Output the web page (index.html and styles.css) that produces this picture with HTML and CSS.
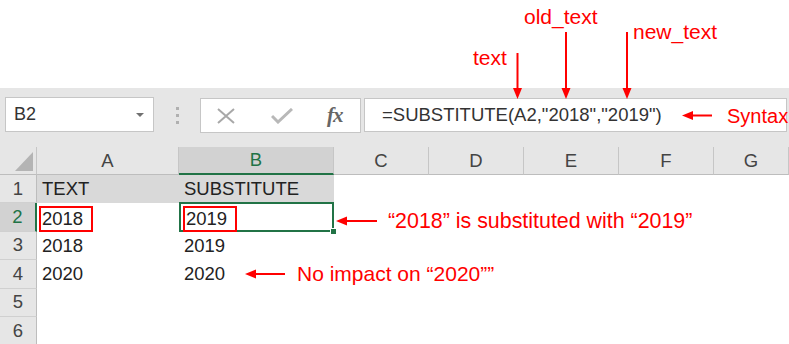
FILE: index.html
```html
<!DOCTYPE html>
<html lang="en">
<head>
  <meta charset="UTF-8" />
  <title>SUBSTITUTE function</title>
  <link rel="stylesheet" href="styles.css">
</head>
<body>
  <div class="page">
    <div class="top-space"></div>

    <div class="toolbar">
      <div class="name-box">
        <span>B2</span>
        <span class="caret"></span>
      </div>
      <div class="grip"><i></i><i></i><i></i></div>
      <div class="buttons">
        <svg class="btn-x" width="18" height="16" viewBox="0 0 18 16">
          <path d="M1 1 L17 15 M17 1 L1 15" stroke="#a8a8a8" stroke-width="2" fill="none"/>
        </svg>
        <svg class="btn-ok" width="22" height="16" viewBox="0 0 22 16">
          <path d="M1 8 L7 14 L21 1" stroke="#b8b8b8" stroke-width="3" fill="none"/>
        </svg>
        <span class="fx">fx</span>
      </div>
      <div class="formula">=SUBSTITUTE(A2,"2018","2019")</div>
    </div>

    <div class="sheet">
      <div class="corner"><span class="tri"></span></div>
      <div class="col-head">A</div>
      <div class="col-head active">B</div>
      <div class="col-head">C</div>
      <div class="col-head">D</div>
      <div class="col-head">E</div>
      <div class="col-head">F</div>
      <div class="col-head">G</div>

      <div class="row-head">1</div>
      <div class="cell filled">TEXT</div>
      <div class="cell filled">SUBSTITUTE</div>
      <div class="cell"></div><div class="cell"></div><div class="cell"></div><div class="cell"></div><div class="cell"></div>

      <div class="row-head active">2</div>
      <div class="cell"><span class="mark">2018</span></div>
      <div class="cell selected"><span class="mark">2019</span><span class="handle"></span></div>
      <div class="cell"></div><div class="cell"></div><div class="cell"></div><div class="cell"></div><div class="cell"></div>

      <div class="row-head">3</div>
      <div class="cell">2018</div>
      <div class="cell">2019</div>
      <div class="cell"></div><div class="cell"></div><div class="cell"></div><div class="cell"></div><div class="cell"></div>

      <div class="row-head">4</div>
      <div class="cell">2020</div>
      <div class="cell">2020</div>
      <div class="cell"></div><div class="cell"></div><div class="cell"></div><div class="cell"></div><div class="cell"></div>

      <div class="row-head">5</div>
      <div class="cell"></div><div class="cell"></div><div class="cell"></div><div class="cell"></div><div class="cell"></div><div class="cell"></div><div class="cell"></div>

      <div class="row-head">6</div>
      <div class="cell"></div><div class="cell"></div><div class="cell"></div><div class="cell"></div><div class="cell"></div><div class="cell"></div><div class="cell"></div>
    </div>

    <!-- annotations drawn over the sheet -->
    <svg class="arrows" width="789" height="344" viewBox="0 0 789 344">
      <g stroke="#ff0000" stroke-width="2" fill="#ff0000">
        <line x1="517.5" y1="53" x2="517.5" y2="90"/>
        <polygon points="513,88 522,88 517.5,99" stroke="none"/>
        <line x1="566" y1="32" x2="566" y2="90"/>
        <polygon points="561.5,88 570.5,88 566,99" stroke="none"/>
        <line x1="627" y1="32" x2="627" y2="90"/>
        <polygon points="622.5,88 631.5,88 627,99" stroke="none"/>

        <line x1="691" y1="115.5" x2="712" y2="115.5"/>
        <polygon points="682,115.5 693,111 693,120" stroke="none"/>

        <line x1="345" y1="221" x2="377" y2="221"/>
        <polygon points="336,221 347,216.5 347,225.5" stroke="none"/>

        <line x1="254" y1="274" x2="285" y2="274"/>
        <polygon points="245,274 256,269.5 256,278.5" stroke="none"/>
      </g>
    </svg>
    <span class="note note-text">text</span>
    <span class="note note-old">old_text</span>
    <span class="note note-new">new_text</span>
    <span class="note note-syntax">Syntax</span>
    <span class="note note-row2">“2018” is substituted with “2019”</span>
    <span class="note note-row4">No impact on “2020””</span>
  </div>
</body>
</html>
```

FILE: styles.css
```css
* {
  margin: 0;
  padding: 0;
  box-sizing: border-box;
}

body {
  font-family: 'Liberation Sans', Arial, sans-serif;
  background-color: #fff;
  color: #222;
}

.page {
  position: relative;
  width: 789px;
  height: 344px;
  overflow: hidden;
}

.top-space {
  height: 88px;
}

/* formula bar */
.toolbar {
  display: flex;
  align-items: flex-start;
  height: 59px;
  padding: 9px 2px 0 5px;
  background-color: #e6e6e6;
}

.name-box {
  display: flex;
  align-items: center;
  justify-content: space-between;
  width: 149px;
  height: 35px;
  padding: 0 9px 0 8px;
  background-color: #fff;
  border: 1px solid #c6c6c6;
  font-size: 18px;
  color: #333;
}

.caret {
  width: 0;
  height: 0;
  border-left: 4.5px solid transparent;
  border-right: 4.5px solid transparent;
  border-top: 4.5px solid #707070;
}

.grip {
  display: flex;
  flex-direction: column;
  gap: 4px;
  margin: 10px 0 0 22px;
}

.grip i {
  width: 3px;
  height: 3px;
  background-color: #b0b0b0;
}

.buttons {
  display: flex;
  align-items: center;
  width: 161px;
  height: 35px;
  margin-left: 21px;
  margin-top: 1px;
  background-color: #fff;
  border: 1px solid #c6c6c6;
}

.btn-x {
  margin-left: 16px;
}

.btn-ok {
  margin-left: 36px;
}

.fx {
  margin-left: 34px;
  font-family: 'Liberation Serif', 'DejaVu Serif', serif;
  font-style: italic;
  font-weight: bold;
  font-size: 21px;
  letter-spacing: -1px;
  color: #666;
}

.formula {
  flex: 1;
  height: 34px;
  margin-left: 3px;
  margin-top: 1px;
  padding: 5px 0 0 17px;
  background-color: #fff;
  border: 1px solid #c6c6c6;
  font-size: 18.5px;
  color: #333;
}

/* grid */
.sheet {
  display: grid;
  grid-template-columns: 37px 142px 155px 95px 95px 95px 95px 75px;
  grid-template-rows: 28px repeat(6, 28.4px);
  font-size: 18.5px;
}

.corner {
  position: relative;
  background-color: #e6e6e6;
  border-right: 1px solid #c6c6c6;
  border-bottom: 1px solid #bdbdbd;
}

.tri {
  position: absolute;
  left: 15px;
  top: 5px;
  width: 0;
  height: 0;
  border-left: 18px solid transparent;
  border-bottom: 19px solid #b4b4b4;
}

.col-head {
  display: flex;
  align-items: center;
  justify-content: center;
  background-color: #e6e6e6;
  border-right: 1px solid #c6c6c6;
  border-bottom: 1px solid #bdbdbd;
  color: #444;
}

.col-head.active {
  background-color: #d2d2d2;
  border-bottom: 2px solid #217346;
  color: #217346;
}

.row-head {
  display: flex;
  align-items: center;
  justify-content: center;
  background-color: #e6e6e6;
  border-right: 1px solid #bdbdbd;
  border-bottom: 1px solid #d0d0d0;
  color: #444;
}

.row-head.active {
  background-color: #d2d2d2;
  border-right: 2px solid #217346;
  color: #217346;
}

.cell {
  position: relative;
  display: flex;
  align-items: center;
  padding-left: 5px;
  white-space: nowrap;
}

.cell.filled {
  background-color: #d9d9d9;
}

.cell.selected {
  border: 2px solid #217346;
  margin-top: -1px;
  padding-left: 3px;
}

.handle {
  position: absolute;
  right: -5px;
  bottom: -5px;
  width: 7px;
  height: 7px;
  background-color: #217346;
  border: 1px solid #fff;
}

.mark {
  display: flex;
  align-items: center;
  height: 26px;
  margin: 3px 0 0 -3px;
  padding: 0 8px 0 1px;
  border: 2px solid #ff0000;
}

.cell.selected .mark {
  margin-left: -1px;
  margin-top: 4px;
}

/* annotations */
.arrows {
  position: absolute;
  top: 0;
  left: 0;
  pointer-events: none;
}

.note {
  position: absolute;
  font-size: 21px;
  line-height: 1;
  color: #ff0000;
  white-space: nowrap;
}

.note-text { left: 473px; top: 47px; }
.note-old { left: 524px; top: 6px; }
.note-new { left: 633px; top: 21px; }
.note-syntax { left: 727px; top: 106px; font-size: 20px; }
.note-row2 { left: 388px; top: 211px; font-size: 21.4px; }
.note-row4 { left: 297px; top: 263px; }
```
